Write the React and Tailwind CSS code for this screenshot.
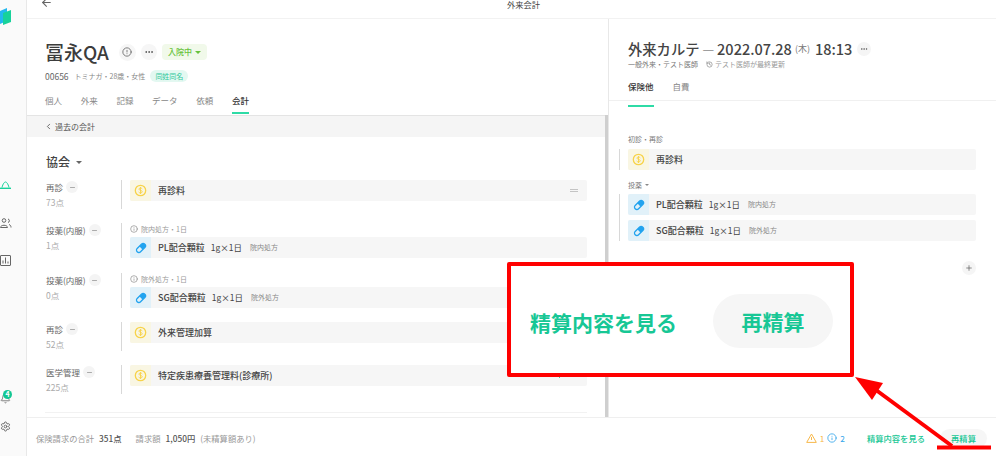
import React from "react";
import { ArrowLeft, ChevronLeft, Plus, Minus, Settings, Bell, Info, History, Ellipsis, CircleAlert } from "lucide-react";

const Coin = () => (
  <div className="w-[21px] self-stretch shrink-0 bg-[#f9f6e3] flex items-center justify-center rounded-l-[2px]">
    <svg width="13" height="13" viewBox="0 0 13 13" fill="none">
      <circle cx="6.5" cy="6.5" r="5.2" stroke="#f7d34a" strokeWidth="1.3" />
      <path d="M8.3 4.9 C8 3.9 4.9 3.6 4.9 5.1 C4.9 6.7 8.3 6 8.3 7.8 C8.3 9.4 5 9.1 4.6 8 M6.5 3 V10" stroke="#f7d34a" strokeWidth="0.9" />
    </svg>
  </div>
);
const Pill = () => (
  <div className="w-[21px] self-stretch shrink-0 bg-[#e1f1f9] flex items-center justify-center rounded-l-[2px]">
    <svg width="12" height="12" viewBox="0 0 12 12" fill="none">
      <g transform="rotate(-45 6 6)">
        <rect x="0.6" y="3.6" width="10.8" height="4.8" rx="2.4" stroke="#22a3ef" strokeWidth="1.3" />
        <path d="M6 3.6 H9 a2.4 2.4 0 0 1 0 4.8 H6Z" fill="#22a3ef" />
      </g>
    </svg>
  </div>
);

const Card = ({ icon, name, dose, note, right }) => (
  <div className="h-[21px] flex items-center bg-[#f6f6f6] rounded-[2px] text-[9px] text-[#444] font-medium">
    {icon}
    <span className="ml-[7px]">{name}</span>
    {dose && <span className="ml-[6px] text-[8.5px] font-normal">{dose}</span>}
    {note && <span className="ml-[8px] text-[7px] font-normal text-[#888]">{note}</span>}
    {right}
  </div>
);

const Label = ({ title, points }) => (
  <div className="w-[75px] shrink-0 pt-[1px]">
    <div className="flex items-center gap-[3px] h-[12px] text-[8.5px] text-[#666]">
      <span>{title}</span>
      <span className="w-3 h-3 rounded-full bg-[#f4f4f4] flex items-center justify-center">
        <Minus size={7} color="#777" strokeWidth={2} />
      </span>
    </div>
    <div className="text-[8.5px] text-[#aaa] mt-[4px] leading-[10px]">{points}</div>
  </div>
);

const Row = ({ title, points, hint, children, className }) => (
  <div className={"flex " + className}>
    <Label title={title} points={points} />
    <div className={"flex-1 border-l border-[#d8d8d8] pl-[8px] " + (hint ? "" : "pb-[8px]")}>
      {hint && (
        <div className="flex items-center gap-[3px] h-[14px] pb-[2px] text-[7px] text-[#999]">
          <Info size={8} color="#888" />
          <span>{hint}</span>
        </div>
      )}
      {children}
    </div>
  </div>
);

const Tab = ({ children, active }) => (
  <div className={"relative text-[8.5px] leading-[13px] " + (active ? "text-[#333] font-medium" : "text-[#888]")}>
    {children}
    {active && <div className="absolute left-0 right-0 -bottom-[7px] h-[2px] bg-[#2edba6]" />}
  </div>
);

export default function App() {
  return (
    <div className="relative w-[996px] h-[456px] overflow-hidden bg-white flex text-[#333]" style={{ fontFamily: '"Noto Sans CJK JP", "Noto Sans", sans-serif' }}>
      <aside className="w-[27px] shrink-0 bg-[#fafafa] border-r border-[#e8e8e8] relative">
        <svg className="absolute left-0 top-[6px]" width="12" height="20" viewBox="0 0 12 20">
          <path d="M0 5 L7 2 V15 L0 18Z" fill="#22b8f0" />
          <path d="M3 7 L11 4 V16 L3 19Z" fill="#17d29b" />
        </svg>
        <svg className="absolute left-0 top-[180px]" width="12" height="10" viewBox="0 0 12 10" fill="none" stroke="#17d29b">
          <path d="M2 7.5 C3 3.5 4.5 2 5.5 2 C6.5 2 8 3.5 9 7.5" strokeWidth="1" />
          <path d="M0 8.3 H11" strokeWidth="1.4" />
        </svg>
        <svg className="absolute left-0 top-[218px]" width="12" height="11" viewBox="0 0 12 11" fill="none" stroke="#666" strokeWidth="1">
          <circle cx="4" cy="2.5" r="1.8" />
          <path d="M.5 9.5 C.5 6.5 7.5 6.5 7.5 9.5 Z" />
          <path d="M8 1 A1.8 1.8 0 0 1 8 4.5 M9 6.5 C10.5 7 11 8 11 9.5" />
        </svg>
        <svg className="absolute left-0 top-[255px]" width="11" height="11" viewBox="0 0 11 11" fill="none" stroke="#666" strokeWidth="1">
          <rect x="0.5" y="0.5" width="10" height="10" rx="0.5" />
          <path d="M3 8.5 V5.5 M5.5 8.5 V2.5 M8 8.5 V6.5" />
        </svg>
        <Bell className="absolute left-0 top-[393px]" size={11} color="#777" />
        <div className="absolute left-[3px] top-[390px] w-[9px] h-[9px] rounded-full bg-[#12c793] text-white text-[7px] leading-[9px] text-center font-bold">4</div>
        <Settings className="absolute left-0 top-[421px]" size={11} color="#666" />
      </aside>

      <div className="flex-1 flex flex-col min-w-0">
        <header className="h-[19px] shrink-0 border-b border-[#f2f2f2] relative">
          <ArrowLeft className="absolute left-[13px] -top-[4px]" size={13} color="#666" />
          <div className="pl-[480px] text-[8.25px] text-[#444] leading-[9px]">外来会計</div>
        </header>

        <div className="flex-1 flex min-h-0">
          <main className="w-[582px] shrink-0 flex flex-col relative border-r border-[#e8e8e8]">
            <div className="pl-[18px] pt-[22px] h-[96px] shrink-0">
              <div className="flex items-center h-[22px]">
                <h1 className="text-[19px] font-medium leading-[24px] text-[#3c3c3c]">冨永QA</h1>
                <span className="ml-[10px] w-[17px] h-[17px] rounded-full bg-[#f6f6f6] flex items-center justify-center"><CircleAlert size={10} color="#666" /></span>
                <span className="ml-[5px] w-[16px] h-[16px] rounded-full bg-[#f6f6f6] flex items-center justify-center"><Ellipsis size={10} color="#444" /></span>
                <span className="ml-[5px] h-[16px] w-[45px] rounded-[4px] bg-[#f1f9ea] flex items-center justify-center gap-[3px] text-[8px] text-[#68c23a] font-medium">
                  入院中<span className="w-0 h-0 border-x-[3px] border-x-transparent border-t-[3px] border-t-[#68c23a]" />
                </span>
              </div>
              <div className="flex items-center h-[12px] mt-[7px] text-[7px] text-[#888]">
                <span className="text-[8.5px] text-[#666]">00656</span>
                <span className="ml-[6px]">トミナガ・28歳・女性</span>
                <span className="ml-[5px] h-[12px] px-[5px] rounded-full bg-[#e3f8f1] text-[#2ec89b] leading-[12px]">同姓同名</span>
              </div>
              <div className="flex gap-[18.7px] mt-[12px]">
                <Tab>個人</Tab><Tab>外来</Tab><Tab>記録</Tab><Tab>データ</Tab><Tab>依頼</Tab><Tab active>会計</Tab>
              </div>
            </div>

            <div className="h-[22px] shrink-0 bg-[#f5f5f5] border-t border-[#e4e4e4] flex items-center pl-[17px] gap-[2px] text-[8px] text-[#555]">
              <ChevronLeft size={9} color="#444" />過去の会計
            </div>

            <div className="flex-1 pl-[19px] pr-[21px] pt-[18px] relative min-h-0 overflow-hidden">
              <div className="flex items-center gap-[6px] h-[14px] text-[12px] font-medium text-[#444]">
                協会<span className="w-0 h-0 border-x-[3px] border-x-transparent border-t-[3px] border-t-[#666]" />
              </div>
              <Row title="再診" points="73点" className="mt-[11px]">
                <Card icon={<Coin />} name="再診料" right={<span className="ml-auto mr-[9px] w-[8px] h-[3px] border-y border-[#c4c4c4]" />} />
              </Row>
              <Row title="投薬(内服)" points="1点" hint="院内処方・1日" className="mt-[14px]">
                <Card icon={<Pill />} name="PL配合顆粒" dose="1g×1日" note="院内処方" />
              </Row>
              <Row title="投薬(内服)" points="0点" hint="院外処方・1日" className="mt-[15px]">
                <Card icon={<Pill />} name="SG配合顆粒" dose="1g×1日" note="院外処方" />
              </Row>
              <Row title="再診" points="52点" className="mt-[14px]">
                <Card icon={<Coin />} name="外来管理加算" />
              </Row>
              <Row title="医学管理" points="225点" className="mt-[14px]">
                <Card icon={<Coin />} name="特定疾患療養管理料(診療所)" right={
                  <span className="ml-auto mr-[9px] flex items-center gap-[8px]">
                    <Plus size={7} color="#17c795" strokeWidth={3} />
                    <span className="w-[7px] h-px bg-[#c4c4c4]" />
                  </span>
                } />
              </Row>
              <div className="absolute left-[18px] right-[21px] bottom-[4px] h-px bg-[#f2f2f2]" />
            </div>
            <div className="absolute right-0 top-[96px] bottom-0 w-[3px] bg-[#cfcfcf]" />
          </main>

          <section className="flex-1 min-w-0 pt-[22px]">
            <div className="pl-[19px]">
              <div className="flex items-center h-[15px] text-[#444]">
                <span className="text-[14.3px] font-medium">外来カルテ</span>
                <span className="text-[13px] text-[#888] ml-[3px]">—</span>
                <span className="text-[14.5px] font-medium ml-[3px]">2022.07.28</span>
                <span className="text-[9px] text-[#777] ml-[3px]">(木)</span>
                <span className="text-[14.5px] font-medium ml-[5px]">18:13</span>
                <span className="ml-[5px] w-[14px] h-[14px] rounded-full bg-[#f5f5f5] flex items-center justify-center"><Ellipsis size={8} color="#555" /></span>
              </div>
              <div className="flex items-center h-[10px] mt-[3px] text-[7px] text-[#777]">
                <span>一般外来・テスト医師</span>
                <History className="ml-[8px] mr-[2px]" size={7} color="#777" />
                <span className="text-[#999]">テスト医師が最終更新</span>
              </div>
            </div>
            <div className="mt-[11px] h-[21px] border-b border-[#f0f0f0] pl-[19px] flex gap-[19px]">
              <Tab active>保険他</Tab><Tab>自費</Tab>
            </div>
            <div className="pl-[10px] pr-[20px] pt-[33px]">
              <div className="pl-[9px] text-[7px] leading-[10px] text-[#777]">初診・再診</div>
              <div className="mt-[5px] border-l border-[#d8d8d8] pl-[8px]">
                <Card icon={<Coin />} name="再診料" />
              </div>
              <div className="pl-[9px] mt-[10px] text-[7px] leading-[10px] text-[#777] flex items-center gap-[3px]">投薬<span className="w-0 h-0 border-x-[2px] border-x-transparent border-t-[2px] border-t-[#888]" /></div>
              <div className="mt-[4px] border-l border-[#d8d8d8] pl-[8px] flex flex-col gap-[5px]">
                <Card icon={<Pill />} name="PL配合顆粒" dose="1g×1日" note="院内処方" />
                <Card icon={<Pill />} name="SG配合顆粒" dose="1g×1日" note="院外処方" />
              </div>
              <div className="flex justify-end mt-[20px]">
                <span className="w-[14px] h-[14px] rounded-full bg-[#f5f5f5] flex items-center justify-center"><Plus size={8} color="#555" /></span>
              </div>
            </div>
          </section>
        </div>

        <footer className="h-[39px] shrink-0 border-t border-[#efefef] flex items-center pl-[9px] pr-[9px] pt-[2px] text-[8.3px] text-[#999] bg-white">
          <span>保険請求の合計</span>
          <span className="ml-[5px] font-medium text-[#555]">351点</span>
          <span className="ml-[14px]">請求額</span>
          <span className="ml-[5px] font-medium text-[#555]">1,050円</span>
          <span className="ml-[5px]">(未精算額あり)</span>
          <div className="ml-auto flex items-center">
            <svg width="11" height="10" viewBox="0 0 11 10" fill="none" stroke="#f7b84b" strokeWidth="1"><path d="M5.5 1 L10.3 9.4 H.7Z" /><path d="M5.5 4V7" /></svg>
            <span className="ml-[3px] text-[#f7b84b]">1</span>
            <Info className="ml-[3px]" size={10} color="#35a6ea" />
            <span className="ml-[3px] text-[#35a6ea]">2</span>
            <span className="ml-[22px] text-[#17c795] font-medium">精算内容を見る</span>
            <span className="ml-[15px] h-[19px] w-[47px] rounded-full bg-[#f6f6f6] text-[#17c795] font-medium flex items-center justify-center">再精算</span>
          </div>
        </footer>
      </div>

      {/* annotation */}
      <div className="absolute left-[507px] top-[262px] w-[347px] h-[115px] bg-white border-[4px] border-[#ff0000] rounded-[2px] flex items-center pl-[19px]">
        <span className="text-[21px] font-bold text-[#17c795] leading-none mt-[6px]">精算内容を見る</span>
        <span className="ml-[36px] mt-[2px] w-[120px] h-[54px] rounded-full bg-[#f6f6f6] text-[21px] font-bold text-[#17c795] flex items-center justify-center pt-[3px]">再精算</span>
      </div>
      <svg className="absolute left-[850px] top-[375px]" width="146" height="81" viewBox="0 0 146 81" fill="none">
        <path d="M26 15 L102 71" stroke="#ff0000" strokeWidth="4" />
        <path d="M5 2 L33 8 L22 25Z" fill="#ff0000" />
        <path d="M87 72.5 H141" stroke="#ff0000" strokeWidth="4" />
      </svg>
    </div>
  );
}
